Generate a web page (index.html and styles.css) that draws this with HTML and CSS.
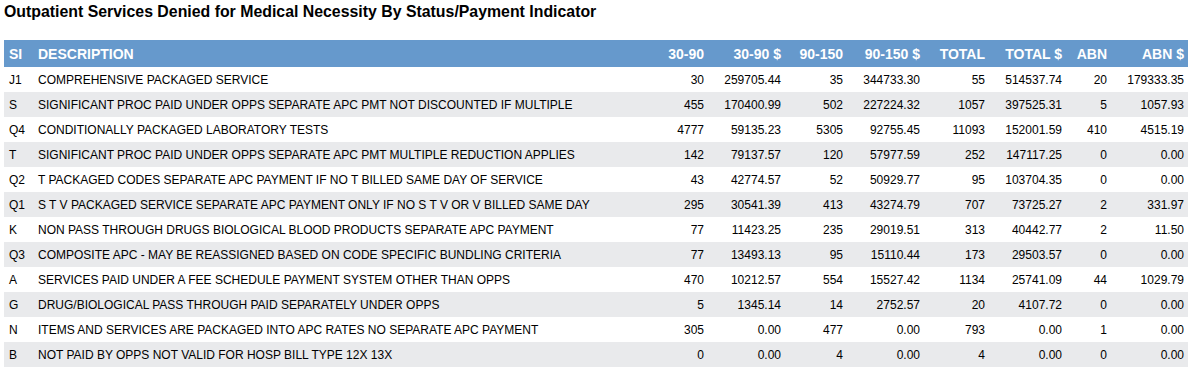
FILE: index.html
```html
<!DOCTYPE html>
<html lang="en">
<head>
    <meta charset="UTF-8">
    <title>Outpatient Services Denied for Medical Necessity</title>
    <link rel="stylesheet" href="styles.css">
</head>
<body>
    <h2 class="report-title">Outpatient Services Denied for Medical Necessity By Status/Payment Indicator</h2>

    <table class="report-table">
        <colgroup>
            <col class="col-si">
            <col class="col-desc">
            <col class="col-cnt">
            <col class="col-amt">
            <col class="col-cnt2">
            <col class="col-amt">
            <col class="col-total">
            <col class="col-amt">
            <col class="col-abn">
            <col class="col-amt">
        </colgroup>
        <thead>
            <tr>
                <th>SI</th>
                <th>DESCRIPTION</th>
                <th class="num">30-90</th>
                <th class="num">30-90 $</th>
                <th class="num">90-150</th>
                <th class="num">90-150 $</th>
                <th class="num">TOTAL</th>
                <th class="num">TOTAL $</th>
                <th class="num">ABN</th>
                <th class="num">ABN $</th>
            </tr>
        </thead>
        <tbody>
            <tr><td>J1</td><td>COMPREHENSIVE PACKAGED SERVICE</td><td class="num">30</td><td class="num">259705.44</td><td class="num">35</td><td class="num">344733.30</td><td class="num">55</td><td class="num">514537.74</td><td class="num">20</td><td class="num">179333.35</td></tr>
            <tr><td>S</td><td>SIGNIFICANT PROC PAID UNDER OPPS SEPARATE APC PMT NOT DISCOUNTED IF MULTIPLE</td><td class="num">455</td><td class="num">170400.99</td><td class="num">502</td><td class="num">227224.32</td><td class="num">1057</td><td class="num">397525.31</td><td class="num">5</td><td class="num">1057.93</td></tr>
            <tr><td>Q4</td><td>CONDITIONALLY PACKAGED LABORATORY TESTS</td><td class="num">4777</td><td class="num">59135.23</td><td class="num">5305</td><td class="num">92755.45</td><td class="num">11093</td><td class="num">152001.59</td><td class="num">410</td><td class="num">4515.19</td></tr>
            <tr><td>T</td><td>SIGNIFICANT PROC PAID UNDER OPPS SEPARATE APC PMT MULTIPLE REDUCTION APPLIES</td><td class="num">142</td><td class="num">79137.57</td><td class="num">120</td><td class="num">57977.59</td><td class="num">252</td><td class="num">147117.25</td><td class="num">0</td><td class="num">0.00</td></tr>
            <tr><td>Q2</td><td>T PACKAGED CODES SEPARATE APC PAYMENT IF NO T BILLED SAME DAY OF SERVICE</td><td class="num">43</td><td class="num">42774.57</td><td class="num">52</td><td class="num">50929.77</td><td class="num">95</td><td class="num">103704.35</td><td class="num">0</td><td class="num">0.00</td></tr>
            <tr><td>Q1</td><td>S T V PACKAGED SERVICE SEPARATE APC PAYMENT ONLY IF NO S T V OR V BILLED SAME DAY</td><td class="num">295</td><td class="num">30541.39</td><td class="num">413</td><td class="num">43274.79</td><td class="num">707</td><td class="num">73725.27</td><td class="num">2</td><td class="num">331.97</td></tr>
            <tr><td>K</td><td>NON PASS THROUGH DRUGS BIOLOGICAL BLOOD PRODUCTS SEPARATE APC PAYMENT</td><td class="num">77</td><td class="num">11423.25</td><td class="num">235</td><td class="num">29019.51</td><td class="num">313</td><td class="num">40442.77</td><td class="num">2</td><td class="num">11.50</td></tr>
            <tr><td>Q3</td><td>COMPOSITE APC - MAY BE REASSIGNED BASED ON CODE SPECIFIC BUNDLING CRITERIA</td><td class="num">77</td><td class="num">13493.13</td><td class="num">95</td><td class="num">15110.44</td><td class="num">173</td><td class="num">29503.57</td><td class="num">0</td><td class="num">0.00</td></tr>
            <tr><td>A</td><td>SERVICES PAID UNDER A FEE SCHEDULE PAYMENT SYSTEM OTHER THAN OPPS</td><td class="num">470</td><td class="num">10212.57</td><td class="num">554</td><td class="num">15527.42</td><td class="num">1134</td><td class="num">25741.09</td><td class="num">44</td><td class="num">1029.79</td></tr>
            <tr><td>G</td><td>DRUG/BIOLOGICAL PASS THROUGH PAID SEPARATELY UNDER OPPS</td><td class="num">5</td><td class="num">1345.14</td><td class="num">14</td><td class="num">2752.57</td><td class="num">20</td><td class="num">4107.72</td><td class="num">0</td><td class="num">0.00</td></tr>
            <tr><td>N</td><td>ITEMS AND SERVICES ARE PACKAGED INTO APC RATES NO SEPARATE APC PAYMENT</td><td class="num">305</td><td class="num">0.00</td><td class="num">477</td><td class="num">0.00</td><td class="num">793</td><td class="num">0.00</td><td class="num">1</td><td class="num">0.00</td></tr>
            <tr><td>B</td><td>NOT PAID BY OPPS NOT VALID FOR HOSP BILL TYPE 12X 13X</td><td class="num">0</td><td class="num">0.00</td><td class="num">4</td><td class="num">0.00</td><td class="num">4</td><td class="num">0.00</td><td class="num">0</td><td class="num">0.00</td></tr>
        </tbody>
    </table>
</body>
</html>
```

FILE: styles.css
```css
:root {
    --header-bg: #6699cc;
    --stripe-bg: #e9eaec;
    --text-primary: #000000;
    --font-primary: 'Liberation Sans', Arial, sans-serif;
}

body {
    margin: 0;
    padding: 0 7px 0 4px;
    font-family: var(--font-primary);
    color: var(--text-primary);
    background-color: #ffffff;
}

.report-title {
    margin: 0;
    padding: 3px 0 0 0;
    height: 40px;
    box-sizing: border-box;
    font-size: 15.87px;
    font-weight: bold;
}

.report-table {
    width: 100%;
    border-collapse: collapse;
    table-layout: fixed;
    font-size: 12px;
}

.col-si { width: 29px; }
.col-cnt { width: 60px; }
.col-amt { width: 77px; }
.col-cnt2 { width: 62px; }
.col-total { width: 65px; }
.col-abn { width: 45px; }

.report-table th {
    height: 27px;
    padding: 0 4px 0 5px;
    background-color: var(--header-bg);
    color: #ffffff;
    font-size: 14px;
    font-weight: bold;
    text-align: left;
    white-space: nowrap;
}

.report-table td {
    height: 25px;
    padding: 0 4px 0 5px;
    white-space: nowrap;
}

.report-table tbody tr:nth-child(even) td {
    background-color: var(--stripe-bg);
}

.report-table .num {
    text-align: right;
}
```
